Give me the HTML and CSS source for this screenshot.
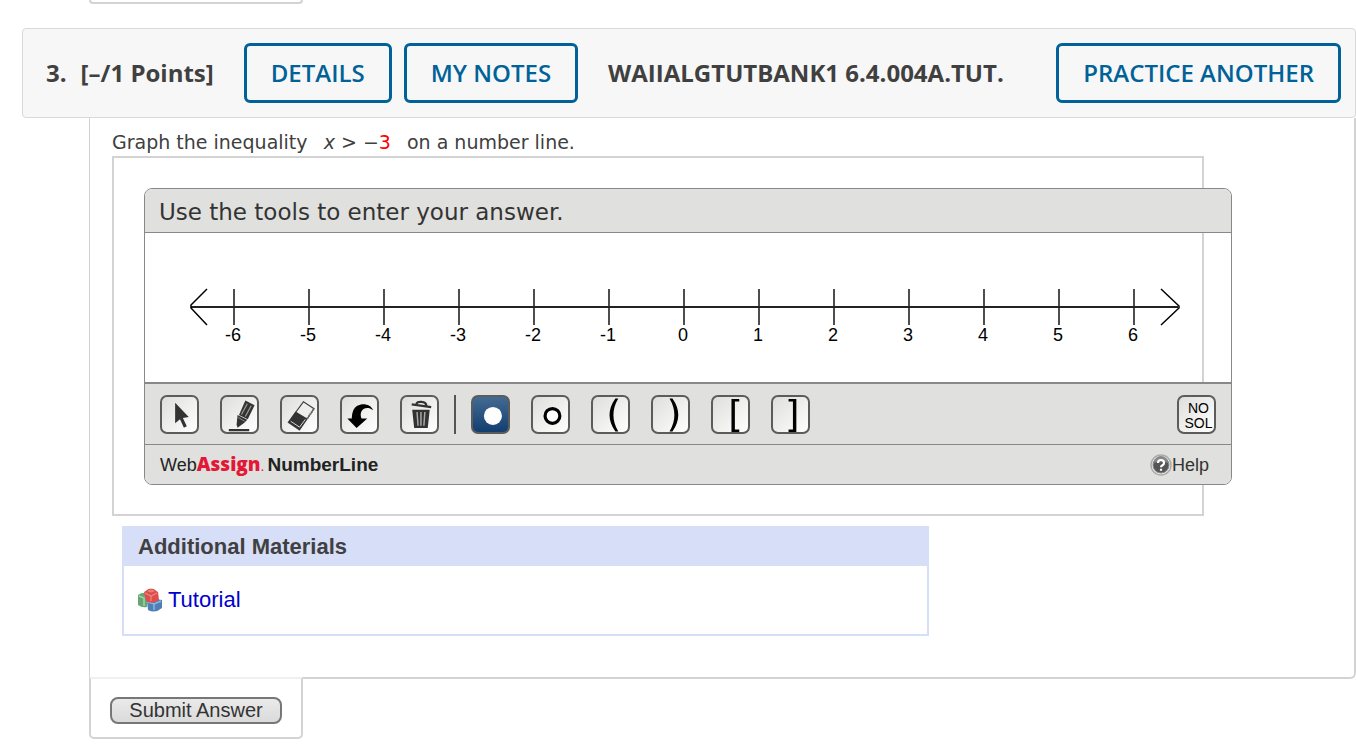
FILE: index.html
```html
<!DOCTYPE html>
<html lang="en">
<head>
<meta charset="utf-8">
<title>Question 3</title>
<link rel="stylesheet" href="styles.css">
</head>
<body>
<div class="previous-submit"></div>
<header class="question-header">
  <h2 class="points"><span>3.</span><span>[–/1 Points]</span></h2>
  <button class="outline-button">DETAILS</button>
  <button class="outline-button">MY NOTES</button>
  <h3 class="source">WAIIALGTUTBANK1 6.4.004A.TUT.</h3>
  <button class="outline-button practice">PRACTICE ANOTHER</button>
</header>
<main class="question">
  <p class="prompt">Graph the inequality &nbsp;<span class="math"><i>x</i> &gt; −<span class="value">3</span></span>&nbsp; on a number line.</p>
  <div class="frame">
    <section class="widget">
      <div class="widget-title">Use the tools to enter your answer.</div>
      <svg class="graph" viewBox="0 0 1086 149" role="img" aria-label="Number line from -6 to 6">
        <g fill="none" stroke="#222" stroke-width="2">
          <path d="M46 74H1033"/>
          <path d="M89 56v36M164 56v36M239 56v36M314 56v36M389 56v36M464 56v36M539 56v36M614 56v36M689 56v36M764 56v36M839 56v36M914 56v36M989 56v36" stroke-width="1.6"/>
          <path d="M62 56L46 72v3l16 17M1016 56l18 17v2l-18 17" stroke="#000" stroke-width="1.5"/>
        </g>
        <g class="tick-labels">
          <text x="88" y="108">-6</text><text x="163" y="108">-5</text><text x="238" y="108">-4</text><text x="313" y="108">-3</text><text x="388" y="108">-2</text><text x="463" y="108">-1</text><text x="538" y="108">0</text><text x="613" y="108">1</text><text x="688" y="108">2</text><text x="763" y="108">3</text><text x="838" y="108">4</text><text x="913" y="108">5</text><text x="988" y="108">6</text>
        </g>
      </svg>
      <div class="toolbar">
        <div class="tools">
          <button class="tool" aria-label="Select"><svg viewBox="0 0 36 36"><path d="M13.500 6v21l5-4 4 8.500 3-1.500-4-8.500 6-1z" fill="#333"/></svg></button>
          <button class="tool" aria-label="Draw"><svg viewBox="0 0 36 36"><path d="M24 3.500l9.500 5-7 14.500-9-4.500z" fill="#333"/><path d="M26 7l-6 11M30 9l-6 11" stroke="#999" stroke-width="1.300"/><path d="M16 18.500l10 5-3 3-7 5-1-3z" fill="#333"/><path d="M16.500 21l7 4" stroke="#888"/><path d="M7 34h21" stroke="#333" stroke-width="2.200"/></svg></button>
          <button class="tool" aria-label="Erase"><svg viewBox="0 0 36 36"><path d="M22 5l11 7-15 22-11.500-8z" fill="#eee" stroke="#444" stroke-width="1.200"/><path d="M14 15l12 7-8 12-11.500-8z" fill="#333"/><path d="M9 25l9 6 6-8" fill="none" stroke="#ddd"/><path d="M26 22l7-10" stroke="#777" stroke-width="2" stroke-dasharray="1.500 1"/></svg></button>
          <button class="tool" aria-label="Undo"><svg viewBox="0 0 36 36"><path d="M32 13.500C29 5.500 15 5 11.500 14q-1.500 4-1.500 8H5.500L15 32l11-10h-6c-3-8 4-14 12-8.500z" fill="#000"/></svg></button>
          <button class="tool" aria-label="Clear all"><svg viewBox="0 0 36 36"><path d="M10 7.500L30 10.500M15 7.500q0-3 5-2.500t5 4" fill="none" stroke="#333" stroke-width="2.400"/><path d="M10.500 13h18l-2 19h-14z" fill="#333"/><path d="M15.500 15.500l1 14M19.500 15.500v14M23.500 15.500l-1 14" stroke="#aaa" stroke-width="1.500"/></svg></button>
        </div>
        <span class="divider"></span>
        <div class="tools">
          <button class="tool selected" aria-label="Closed point"><svg viewBox="0 0 36 36"><circle cx="20.500" cy="19.500" r="9.300" fill="#fff"/></svg></button>
          <button class="tool" aria-label="Open point"><svg viewBox="0 0 36 36"><circle cx="20" cy="19.500" r="7.600" fill="#fff" stroke="#000" stroke-width="3.300"/></svg></button>
          <button class="tool" aria-label="Left parenthesis"><svg viewBox="0 0 36 36"><path d="M23 1.500h3q-10 17 0 34h-3q-12-17 0-34z"/></svg></button>
          <button class="tool" aria-label="Right parenthesis"><svg viewBox="0 0 36 36"><path d="M17 1.500h3q12 17 0 34h-3q10-17 0-34z"/></svg></button>
          <button class="tool" aria-label="Left bracket"><svg viewBox="0 0 36 36"><path d="M19 2h8v2.500h-4.500v29H27V36h-8z"/></svg></button>
          <button class="tool" aria-label="Right bracket"><svg viewBox="0 0 36 36"><path d="M16 2h8v34h-8v-2.500h4.500v-29H16z"/></svg></button>
        </div>
        <button class="tool no-solution">NO<br>SOL</button>
      </div>
      <footer class="widget-footer">
        <div class="brand"><span class="web">Web</span><span class="assign">Assign</span><span class="dot">.</span><span class="product">NumberLine</span></div>
        <a class="help" href="#"><svg viewBox="0 0 22 22"><circle cx="11" cy="11" r="10" fill="#eee" stroke="#aaa" stroke-width="1.500"/><circle cx="11" cy="11" r="8" fill="#555" stroke="#888"/><path d="M4 9a7 7 0 0 1 14 0q-7-3-14 0z" fill="#888"/><path d="M8 9q0-3 3-3t3 3q0 1.500-1.500 2.300T11 13.200M11 14.800v2" fill="none" stroke="#fff" stroke-width="2.200"/></svg>Help</a>
      </footer>
    </section>
  </div>
  <section class="materials">
    <h4>Additional Materials</h4>
    <a class="tutorial" href="#"><svg viewBox="0 0 24 24"><path d="M0 7q4-3 9-2v14q-5 1-9-2z" fill="#63a873"/><path d="M1 8l5 2v8" fill="none" stroke="#a5cfaa" stroke-width="1.500"/><path d="M9 13q7-3 15-1v8q-7 6-14 2z" fill="#4c80b7"/><path d="M10 14l6 2 7-3M16 16v6" fill="none" stroke="#8db6df" stroke-width="1.500"/><path d="M6 4q7-6 14 0l1 8q-6 5-13 1z" fill="#df4e4e"/><path d="M7 5l6 3 6-3M13 8v5" fill="none" stroke="#ee8580" stroke-width="1.200"/><ellipse cx="13" cy="3" rx="4" ry="2" fill="#ef7770" stroke="#c53e3e" stroke-width=".7"/></svg><span>Tutorial</span></a>
  </section>
</main>
<div class="submit-area"><button class="submit">Submit Answer</button></div>
</body>
</html>
```

FILE: styles.css
```css
* { box-sizing: border-box; }
body {
  margin: 0;
  background: #fff;
  color: #404040;
  font-family: "Liberation Sans", Arial, sans-serif;
}
button { font: inherit; cursor: pointer; }
h2, h3, h4, p { margin: 0; }

.previous-submit {
  width: 214px;
  height: 4px;
  margin-left: 89px;
  border: 2px solid #d3d3d3;
  border-top: 0;
  border-radius: 0 0 5px 5px;
}

.question-header {
  display: flex;
  align-items: center;
  margin: 24px 0 0 22px;
  padding: 14px;
  padding-left: 23px;
  border: 1px solid #d9d9d9;
  border-radius: 4px;
  background: #f7f7f7;
  font-family: "Open Sans", sans-serif;
  font-size: 24px;
  line-height: 34px;
  white-space: nowrap;
}
.points, .source { font-size: 24px; font-weight: 700; }
.points { display: flex; gap: 14px; margin-right: 30px; }
.outline-button {
  margin-right: 12px;
  padding: 10px 24px;
  border: 3px solid #006298;
  border-radius: 6px;
  background: transparent;
  color: #006298;
  font-weight: 600;
}
.source { margin-left: 18px; }
.practice { margin: 0 0 0 auto; }

.question {
  margin-left: 89px;
  padding: 12px 0 41px 22px;
  border: solid #d3d3d3;
  border-width: 0 2px 2px 1px;
  border-radius: 0 0 6px 0;
}
.prompt {
  padding-bottom: 2px;
  font-family: "DejaVu Sans", Verdana, sans-serif;
  font-size: 19px;
  line-height: 24px;
}
.math { margin: 0 4px; }
.value { color: #f00; }
.frame {
  margin-right: 150px;
  padding: 30px 0 29px;
  border: 2px solid #d3d3d3;
}
.widget {
  margin: 0 -30px 0 30px;
  border: 1px solid #888;
  border-radius: 8px;
  overflow: hidden;
}
.widget-title {
  padding: 8px 14px 4px;
  border-bottom: 1px solid #888;
  background: #e0e0de;
  color: #333;
  font-family: "DejaVu Sans", Verdana, sans-serif;
  font-size: 23px;
  line-height: 31px;
}
.graph { display: block; width: 100%; }
.tick-labels {
  fill: #000;
  font-family: "Liberation Sans", sans-serif;
  font-size: 18px;
  text-anchor: middle;
}
.toolbar {
  display: flex;
  align-items: center;
  gap: 15px;
  padding: 11px 15px 10px;
  border: solid #888;
  border-width: 2px 0 1px;
  background: #e0e0de;
}
.tools { display: flex; gap: 21px; }
.tool {
  width: 39px;
  height: 39px;
  padding: 0;
  border: 2px solid #5c5c5a;
  border-radius: 7px;
  background: linear-gradient(135deg, #dededc, #fff);
}
.tool svg { display: block; width: 35px; height: 35px; }
.selected { background: linear-gradient(#436a92, #123e70); }
.divider { width: 2px; height: 39px; background: #555; }
.no-solution {
  margin-left: auto;
  padding: 2px 0 0 4px;
  color: #000;
  font-size: 14px;
  line-height: 15px;
}
.widget-footer {
  display: flex;
  align-items: center;
  justify-content: space-between;
  height: 39px;
  padding: 0 22px 0 15px;
  background: #e0e0de;
  line-height: 38px;
}
.brand { display: flex; align-items: baseline; color: #222; font-size: 19px; }
.web { font-size: 18px; }
.assign { color: #e31837; font-family: "Open Sans", sans-serif; font-weight: 800; }
.dot { color: #e31837; font-size: 14px; }
.product { margin-left: 3px; font-weight: 700; }
.help {
  display: flex;
  align-items: center;
  color: #333;
  font-size: 18px;
  text-decoration: none;
}
.help svg { width: 22px; height: 22px; }

.materials {
  width: 65%;
  margin: 10px 0 0 10px;
  border: 2px solid #d6def8;
}
.materials h4 {
  padding: 0 14px;
  background: #d6def8;
  font-size: 22px;
  line-height: 38px;
}
.tutorial {
  display: flex;
  align-items: center;
  gap: 6px;
  padding: 15px 14px;
  color: #0000ce;
  font-size: 22px;
  line-height: 38px;
  text-decoration: none;
}
.tutorial svg { width: 24px; height: 24px; }

.submit-area {
  width: 214px;
  margin: -2px 0 0 89px;
  padding: 18px 19px 13px;
  border: 2px solid #d3d3d3;
  border-top-color: #f0f0f0;
  border-radius: 0 0 5px 5px;
  background: #fff;
}
.submit {
  display: block;
  width: 100%;
  padding: 0;
  border: 2px solid #777;
  border-radius: 8px;
  background: linear-gradient(#eaeaea, #dadada);
  color: #333;
  font-size: 20px;
  line-height: 23px;
}
```
